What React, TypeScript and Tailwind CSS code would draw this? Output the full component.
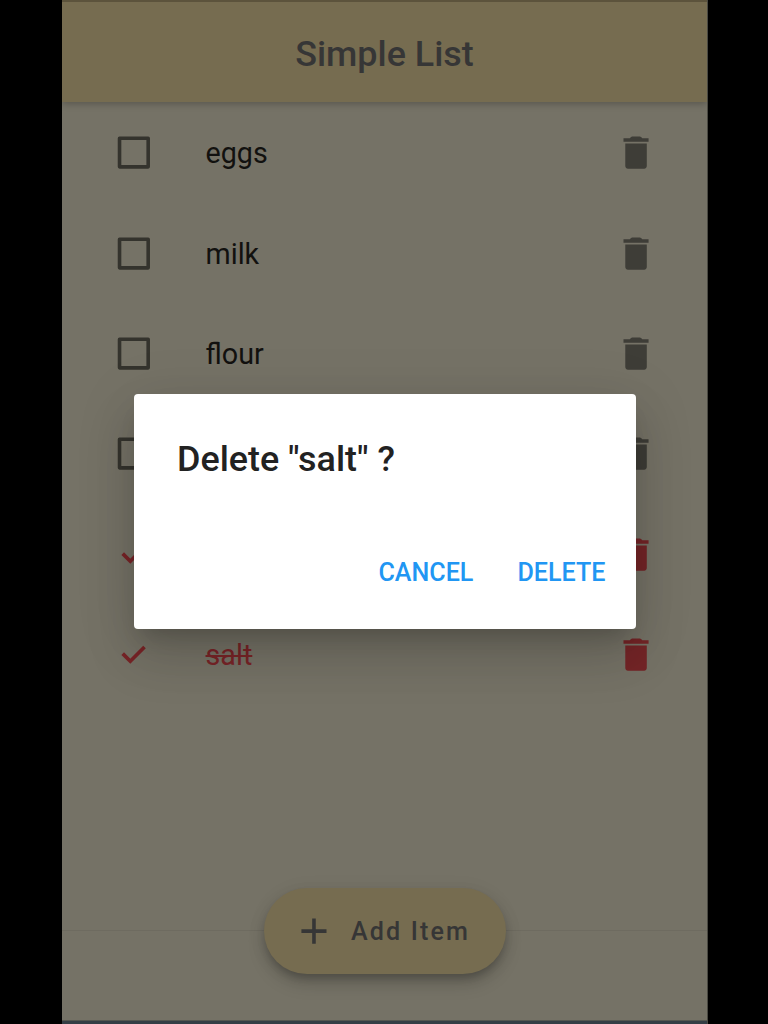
const items = [
  { name: 'eggs', done: false },
  { name: 'milk', done: false },
  { name: 'flour', done: false },
  { name: '', done: false },
  { name: '', done: true },
  { name: 'salt', done: true },
];

function BoxIcon() {
  return (
    <svg viewBox="-0.2 0 24 24" className="size-[43px] fill-[#34332d]">
      <path fillRule="evenodd" d="M4 3h16a1 1 0 0 1 1 1v16a1 1 0 0 1-1 1H4a1 1 0 0 1-1-1V4a1 1 0 0 1 1-1zM5 5v14h14V5z" />
    </svg>
  );
}

function CheckIcon() {
  return (
    <svg viewBox="0 0 43 43" className="size-[43px] fill-none stroke-[#782427]">
      <path d="M10.7 20.6 18.3 28.2 32.500 14" strokeWidth="3.7" />
    </svg>
  );
}

function TrashIcon({ done }: { done: boolean }) {
  return (
    <svg viewBox="-0.3 0 24 24" className={`size-[43px] ${done ? 'fill-[#742527]' : 'fill-[#3e3d37]'}`}>
      <path d="M6 19.5c0 .9.7 1.5 1.5 1.5h9c.8 0 1.5-.6 1.5-1.5V7H6v12.5zM19 4h-3.5l-.7-.7c-.2-.2-.4-.3-.7-.3H9.9c-.3 0-.5.1-.7.3l-.7.7H5v2h14V4z" />
    </svg>
  );
}

export default function App() {
  return (
    <div className="relative h-[1024px] w-[768px] overflow-hidden bg-black pl-[62px] font-['Roboto',sans-serif]">
      <div className="flex h-full w-[646px] flex-col overflow-hidden border-r border-[#4a4942] bg-[#757266]">
        <header className="flex h-[102px] shrink-0 items-center justify-center border-t-2 border-[#5c533c] bg-[#766c50] pt-[5px] shadow-[0_2px_7px_rgba(0,0,0,0.24)]">
          <h1 className="text-[35.9px] leading-none font-medium text-[#363636]">Simple List</h1>
        </header>
        <ul className="flex h-[828.5px] shrink-0 flex-col border-b border-[#6e6b60] pt-[0.5px]">
          {items.map(({ name, done }, index) => (
            <li key={index} className="flex h-[100.4px] shrink-0 items-center pr-[50px] pl-[50px]">
              {done ? <CheckIcon /> : <BoxIcon />}
              <span className={`ml-[50.5px] flex-1 pt-[2px] text-[28.7px] leading-none ${done ? 'text-[#782427] line-through decoration-2' : 'text-[#12110f]'}`}>{name}</span>
              <TrashIcon done={done} />
            </li>
          ))}
        </ul>
        <div className="flex-1" />
        <div className="h-[4px] border-t border-[#545750] bg-[#343e45]" />
      </div>

      <button className="absolute top-[888px] left-[264px] flex h-[86px] w-[242px] items-center rounded-full bg-[#766c50] pl-[28.5px] text-[#363636] shadow-[0_6px_9px_-2px_rgba(0,0,0,0.2),0_10px_18px_rgba(0,0,0,0.14),0_2px_20px_rgba(0,0,0,0.06)]">
        <svg viewBox="0.3 0.2 24 24" className="size-[43px] fill-current">
          <path d="M19 13h-6v6h-2v-6H5v-2h6V5h2v6h6v2z" />
        </svg>
        <span className="ml-[15.5px] pt-[2px] text-[25.1px] leading-none font-medium tracking-[2.15px] whitespace-nowrap">Add Item</span>
      </button>

      <div role="dialog" className="absolute top-[394px] left-[134px] flex h-[235px] w-[502px] flex-col rounded-[4px] bg-white px-[43px] pt-[47px] shadow-[0_14px_20px_-9px_rgba(0,0,0,0.18),0_28px_50px_3px_rgba(0,0,0,0.12),0_10px_60px_7px_rgba(0,0,0,0.08)]">
        <h2 className="text-[35.9px] leading-[36px] font-medium text-[#222222]">Delete "salt" ?</h2>
        <div className="-mr-[12.4px] mt-[83px] flex justify-end gap-[44px] text-[25.1px] leading-[26px] font-medium text-[#2196f3]">
          <button>CANCEL</button>
          <button>DELETE</button>
        </div>
      </div>
    </div>
  );
}
